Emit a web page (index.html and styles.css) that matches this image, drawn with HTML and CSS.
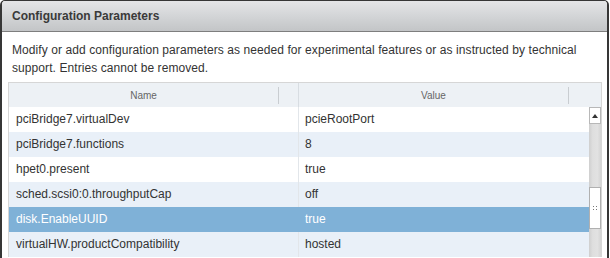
FILE: index.html
```html
<!DOCTYPE html>
<html>
<head>
<meta charset="utf-8">
<link rel="stylesheet" href="styles.css">
</head>
<body>
<div class="dialog">
  <div class="dialog-header">Configuration Parameters</div>
  <div class="dialog-body">
    <p class="desc">Modify or add configuration parameters as needed for experimental features or as instructed by technical support. Entries cannot be removed.</p>
    <div class="grid">
      <div class="grid-head">
        <div class="hcell hcell-name"><span class="hlabel">Name</span><span class="hsep"></span></div>
        <div class="hcell hcell-value"><span class="hlabel">Value</span><span class="hsep"></span></div>
      </div>
      <div class="grid-body">
        <div class="rows">
          <div class="row"><div class="c-name">pciBridge7.virtualDev</div><div class="c-value">pcieRootPort</div></div>
          <div class="row alt"><div class="c-name">pciBridge7.functions</div><div class="c-value">8</div></div>
          <div class="row"><div class="c-name">hpet0.present</div><div class="c-value">true</div></div>
          <div class="row alt"><div class="c-name">sched.scsi0:0.throughputCap</div><div class="c-value">off</div></div>
          <div class="row selected"><div class="c-name">disk.EnableUUID</div><div class="c-value">true</div></div>
          <div class="row alt"><div class="c-name">virtualHW.productCompatibility</div><div class="c-value">hosted</div></div>
        </div>
        <div class="vscroll">
          <div class="sb-up"><svg width="6" height="4" viewBox="0 0 6 4"><path d="M0 4 L3 0 L6 4 Z" fill="#333"/></svg></div>
          <div class="sb-thumb"><svg width="4" height="5" viewBox="0 0 4 5"><rect x="0" y="0" width="1" height="1" fill="#777"/><rect x="3" y="0" width="1" height="1" fill="#777"/><rect x="0" y="3" width="1" height="1" fill="#777"/><rect x="3" y="3" width="1" height="1" fill="#777"/></svg></div>
        </div>
      </div>
    </div>
  </div>
</div>
</body>
</html>
```

FILE: styles.css
```css
html, body {
  margin: 0;
  padding: 0;
  background: #ffffff;
}
body {
  font-family: "Liberation Sans", Arial, sans-serif;
  color: #333333;
}
.dialog {
  width: 609px;
  height: 258px;
  box-sizing: border-box;
  border: 2px solid #363636;
  border-top-width: 1px;
  border-bottom: none;
  border-radius: 5px 5px 0 0;
  overflow: hidden;
  background: #ffffff;
}
.dialog-header {
  height: 30px;
  line-height: 30px;
  padding-left: 10px;
  font-size: 12px;
  font-weight: bold;
  color: #3a3a3a;
  background: linear-gradient(to bottom, #e4e5e7 0%, #d3d5d7 50%, #c3c5c7 100%);
  border-bottom: 1px solid #7e7e7e;
}
.dialog-body {
  padding: 9px 5px 0 6px;
}
.desc {
  margin: 0 0 5px 4px;
  font-size: 12px;
  line-height: 18px;
  letter-spacing: 0.08px;
  color: #333333;
}
.grid {
  border: 1px solid #d6d6d6;
  border-bottom: none;
  width: 594px;
  box-sizing: border-box;
}
.grid-head {
  display: flex;
  height: 24px;
  background: #edf1f5;
}
.hcell {
  display: flex;
  align-items: center;
  font-size: 10px;
  color: #666666;
}
.hcell-name {
  width: 289px;
  padding-right: 19px;
  box-sizing: border-box;
}
.hcell-value {
  flex: 1;
  border-left: 1px solid #d8dde2;
  padding-right: 32px;
}
.hlabel {
  flex: 1;
  text-align: center;
}
.hsep {
  width: 1px;
  height: 17px;
  background: #c9cdd1;
}
.grid-body {
  display: flex;
}
.rows {
  width: 580px;
}
.row {
  display: flex;
  height: 25px;
  line-height: 25px;
  font-size: 12px;
  color: #333333;
  background: #ffffff;
}
.row.alt {
  background: #e9f0f8;
}
.row.selected {
  background: #7fb1d7;
  color: #ffffff;
}
.c-name {
  width: 289px;
  padding-left: 7px;
  box-sizing: border-box;
  white-space: nowrap;
}
.c-value {
  flex: 1;
  padding-left: 6px;
  border-left: 1px solid #e2e6ea;
  white-space: nowrap;
}
.row.selected .c-value {
  border-left-color: #7fb1d7;
}
.vscroll {
  width: 12px;
  display: flex;
  flex-direction: column;
  align-items: stretch;
  background: linear-gradient(to right, #cfcfcf 0%, #dedede 30%, #e2e2e2 70%, #d4d4d4 100%);
}
.sb-up {
  height: 17px;
  box-sizing: border-box;
  background: #ffffff;
  border: 1px solid #b8b8b8;
  display: flex;
  align-items: center;
  justify-content: center;
}
.sb-thumb {
  margin-top: 63px;
  height: 42px;
  box-sizing: border-box;
  background: #ffffff;
  border: 1px solid #b0b0b0;
  display: flex;
  align-items: center;
  justify-content: center;
}
```
